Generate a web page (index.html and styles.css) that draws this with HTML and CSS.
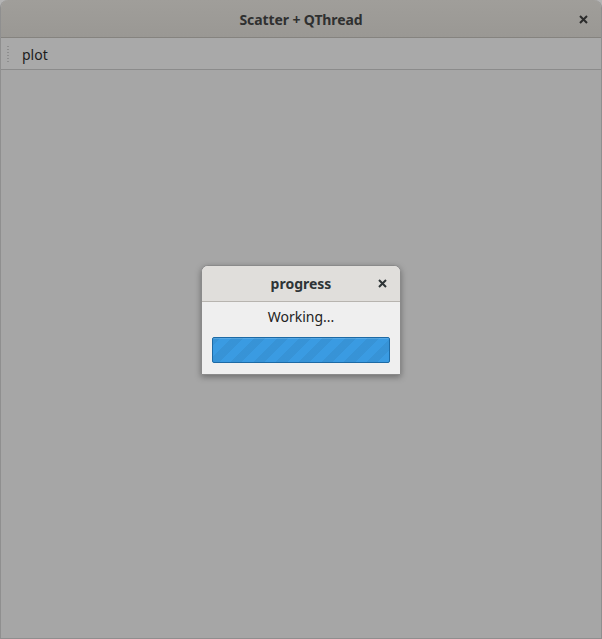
FILE: index.html
```html
<!DOCTYPE html>
<html>
<head>
<meta charset="utf-8">
<link rel="stylesheet" href="styles.css">
</head>
<body>
<div class="window">
  <div class="titlebar">
    <span class="title">Scatter + QThread</span>
    <span class="close">
      <svg width="9" height="9" viewBox="0 0 9 9"><path d="M1 1L8 8M8 1L1 8" stroke="#2b2b2b" stroke-width="2"/></svg>
    </span>
  </div>
  <div class="menubar">
    <span class="grip"></span>
    <span class="menu-item">plot</span>
  </div>
  <div class="content"></div>
</div>
<div class="dialog">
  <div class="dlg-titlebar">
    <span class="dlg-title">progress</span>
    <span class="dlg-close">
      <svg width="9" height="9" viewBox="0 0 9 9"><path d="M1 1L8 8M8 1L1 8" stroke="#2e3436" stroke-width="2"/></svg>
    </span>
  </div>
  <div class="dlg-body">
    <div class="label">Working...</div>
    <div class="progress"><div class="stripes"></div></div>
  </div>
</div>
</body>
</html>
```
FILE: styles.css
```css
html, body {
  margin: 0;
  padding: 0;
  height: 100%;
}
body {
  background: #b4b4b4;
  font-family: "Noto Sans", "Open Sans", sans-serif;
  position: relative;
  overflow: hidden;
}
.window {
  height: 639px;
  display: flex;
  flex-direction: column;
  border-radius: 8px 8px 0 0;
  overflow: hidden;
  box-sizing: border-box;
  border-left: 1px solid #8f8f8f;
  border-right: 1px solid #8f8f8f;
  border-bottom: 1px solid #8f8f8f;
}
.titlebar {
  height: 37px;
  flex: none;
  background: linear-gradient(#a09e9a, #9a9894);
  border-bottom: 1px solid #85837f;
  display: flex;
  align-items: center;
  justify-content: center;
  position: relative;
}
.title {
  font-weight: bold;
  font-size: 14px;
  color: #2f3030;
  letter-spacing: -0.1px;
  margin-top: 2px;
}
.close {
  position: absolute;
  right: 13px;
  top: 15px;
  width: 9px;
  height: 9px;
  display: flex;
}
.menubar {
  height: 31px;
  flex: none;
  background: #a9a9a9;
  border-bottom: 1px solid #8b8b8b;
  display: flex;
  align-items: center;
}
.grip {
  width: 2px;
  height: 18px;
  margin-left: 6px;
  background-image: radial-gradient(circle, #8e8e8e 0.7px, transparent 0.8px);
  background-size: 2px 3px;
}
.menu-item {
  margin-left: 13px;
  font-size: 14px;
  color: #1c1c1c;
  margin-top: 1px;
}
.content {
  flex: 1;
  background: #a6a6a6;
}
.dialog {
  position: absolute;
  left: 201px;
  top: 265px;
  width: 200px;
  height: 110px;
  box-sizing: border-box;
  border-radius: 7px 7px 0 0;
  border: 1px solid #8a8a8a;
  background: #efefef;
  box-shadow: 0 2px 6px rgba(0,0,0,0.35);
  overflow: hidden;
  display: flex;
  flex-direction: column;
}
.dlg-titlebar {
  height: 35px;
  flex: none;
  background: #e0dedb;
  border-bottom: 1px solid #b7b4af;
  display: flex;
  align-items: center;
  justify-content: center;
  position: relative;
}
.dlg-title {
  font-weight: bold;
  font-size: 14px;
  color: #2e3436;
  margin-top: -1px;
}
.dlg-close {
  position: absolute;
  right: 13px;
  top: 13px;
  width: 9px;
  height: 9px;
  display: flex;
}
.dlg-body {
  flex: 1;
  display: flex;
  flex-direction: column;
  align-items: center;
  padding-top: 5px;
}
.label {
  font-size: 14px;
  color: #222;
  height: 20px;
  line-height: 20px;
}
.progress {
  margin-top: 10px;
  width: 178px;
  height: 26px;
  box-sizing: border-box;
  border: 1px solid #1d6aa5;
  border-radius: 2px;
  background: #3a9be2;
  overflow: hidden;
}
.stripes {
  width: 100%;
  height: 100%;
  background: repeating-linear-gradient(-45deg, rgba(0,0,0,0) 0 8px, rgba(0,0,0,0.05) 8px 16px);
  box-shadow: inset 0 1px 0 rgba(255,255,255,0.15);
}
```
